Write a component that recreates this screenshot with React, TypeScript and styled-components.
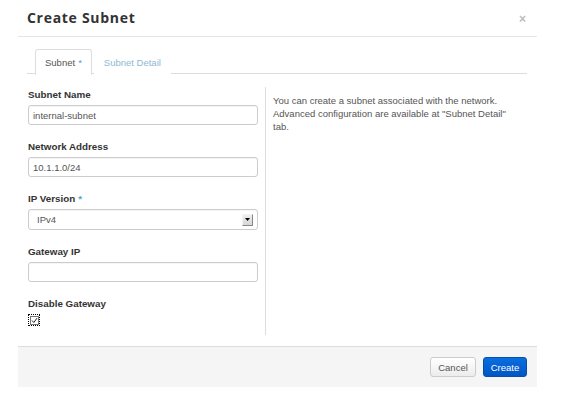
import React from "react";
import styled, { createGlobalStyle } from "styled-components";

const Global = createGlobalStyle`
  html, body { margin: 0; padding: 0; background: #fff; }
  body { font-family: "Liberation Sans", Arial, sans-serif; color: #333; }
  * { box-sizing: border-box; }
`;

const Page = styled.div`
  padding-left: 18px;
  width: 579px;
  height: 402px;
`;

const Modal = styled.div`
  width: 519px;
  background: #fff;
`;

const Header = styled.div`
  height: 37px;
  border-bottom: 1px solid #e5e5e5;
  display: flex;
  align-items: center;
  justify-content: space-between;
  padding: 0 11px 0 9px;
`;

const Title = styled.h3`
  margin: 0;
  font-family: "Open Sans", sans-serif;
  font-weight: 700;
  font-size: 14px;
  letter-spacing: 0.7px;
  color: #333;
  line-height: 1;
`;

const Close = styled.span`
  font-family: "Liberation Sans", Arial, sans-serif;
  font-size: 12px;
  font-weight: 700;
  color: #bbb;
  line-height: 1;
  margin-top: 2px;
`;

const Body = styled.div`
  padding: 12px 10px 11px 9px;
`;

const TabBar = styled.ul`
  display: flex;
  margin: 0;
  padding: 0 0 0 8px;
  list-style: none;
  border-bottom: 1px solid #ddd;
  height: 25px;
`;

const Tab = styled.li<{ $active?: boolean }>`
  height: 26px;
  padding: 0 9px;
  display: flex;
  align-items: center;
  font-size: 9.5px;
  color: ${(p) => (p.$active ? "#555" : "#8fb8d3")};
  background: #fff;
  border: 1px solid ${(p) => (p.$active ? "#ddd" : "transparent")};
  border-bottom-color: ${(p) => (p.$active ? "#fff" : "transparent")};
  border-radius: 3px 3px 0 0;
  margin-right: 2px;
`;

const Req = styled.span`
  color: #5aa0d0;
  margin-left: 3px;
`;

const Columns = styled.div`
  display: flex;
  margin-top: 13px;
`;

const LeftCol = styled.div`
  width: 239px;
  padding: 1px 7px 0 1px;
  border-right: 1px solid #ddd;
  height: 248px;
`;

const RightCol = styled.div`
  flex: 1;
  padding: 7px 0 0 7px;
  font-size: 9.5px;
  line-height: 13px;
  color: #555;
`;

const Group = styled.div`
  margin-bottom: 15px;
`;

const Label = styled.div`
  font-size: 9.8px;
  font-weight: 700;
  line-height: 14px;
  color: #333;
  margin-bottom: 3px;
`;

const Input = styled.div`
  height: 20px;
  border: 1px solid #ccc;
  border-radius: 3px;
  padding: 0 4px;
  font-size: 9.5px;
  display: flex;
  align-items: center;
  color: #555;
  background: #fff;
  box-shadow: inset 0 1px 1px rgba(0, 0, 0, 0.04);
`;

const Select = styled(Input)`
  height: 21px;
  justify-content: space-between;
  padding: 0 4px 0 8px;
`;

const Arrow = styled.span`
  width: 11px;
  height: 12px;
  background: linear-gradient(#eee, #d6d6d6);
  border-right: 1px solid #888;
  border-bottom: 1px solid #888;
  border-top: 1px solid #f4f4f4;
  border-left: 1px solid #f4f4f4;
  display: flex;
  align-items: center;
  justify-content: center;
`;

const CheckWrap = styled.div`
  display: flex;
  width: 12px;
  height: 12px;
  border: 1px dotted #000;
  align-items: center;
  justify-content: center;
  margin-top: 2px;
`;

const Footer = styled.div`
  border-top: 1px solid #ddd;
  background: #f5f5f5;
  height: 41px;
  display: flex;
  justify-content: flex-end;
  align-items: flex-start;
  padding: 10px 10px 0 0;
  gap: 7px;
`;

const Button = styled.button<{ $primary?: boolean }>`
  height: 20px;
  padding: 0;
  font-family: "Liberation Sans", Arial, sans-serif;
  font-size: 9.5px;
  border-radius: 3px;
  border: 1px solid ${(p) => (p.$primary ? "#0350a8" : "#ccc")};
  color: ${(p) => (p.$primary ? "#fff" : "#555")};
  background: ${(p) =>
    p.$primary ? "linear-gradient(#0a6ee0, #0055c4)" : "linear-gradient(#fff, #ececec)"};
  width: ${(p) => (p.$primary ? "44px" : "46px")};
`;

export default function App() {
  return (
    <>
      <Global />
      <Page>
        <Modal>
          <Header>
            <Title>Create Subnet</Title>
            <Close>×</Close>
          </Header>
          <Body>
            <TabBar>
              <Tab $active>
                Subnet<Req>*</Req>
              </Tab>
              <Tab>Subnet Detail</Tab>
            </TabBar>
            <Columns>
              <LeftCol>
                <Group>
                  <Label>Subnet Name</Label>
                  <Input>internal-subnet</Input>
                </Group>
                <Group>
                  <Label>Network Address</Label>
                  <Input>10.1.1.0/24</Input>
                </Group>
                <Group>
                  <Label>
                    IP Version<Req>*</Req>
                  </Label>
                  <Select>
                    IPv4
                    <Arrow>
                      <svg width="5" height="3" viewBox="0 0 5 3">
                        <path d="M0 0H5L2.5 3Z" fill="#000" />
                      </svg>
                    </Arrow>
                  </Select>
                </Group>
                <Group>
                  <Label>Gateway IP</Label>
                  <Input />
                </Group>
                <Group>
                  <Label>Disable Gateway</Label>
                  <CheckWrap>
                    <svg width="9" height="9" viewBox="0 0 9 9">
                      <rect x="0.5" y="0.5" width="8" height="8" fill="#fff" stroke="#777" />
                      <path d="M2 4.5L3.8 6.5L7 2.2" fill="none" stroke="#222" strokeWidth="1" />
                    </svg>
                  </CheckWrap>
                </Group>
              </LeftCol>
              <RightCol>
                You can create a subnet associated with the network.
                <br />
                Advanced configuration are available at "Subnet Detail"
                <br />
                tab.
              </RightCol>
            </Columns>
          </Body>
          <Footer>
            <Button>Cancel</Button>
            <Button $primary>Create</Button>
          </Footer>
        </Modal>
      </Page>
    </>
  );
}
